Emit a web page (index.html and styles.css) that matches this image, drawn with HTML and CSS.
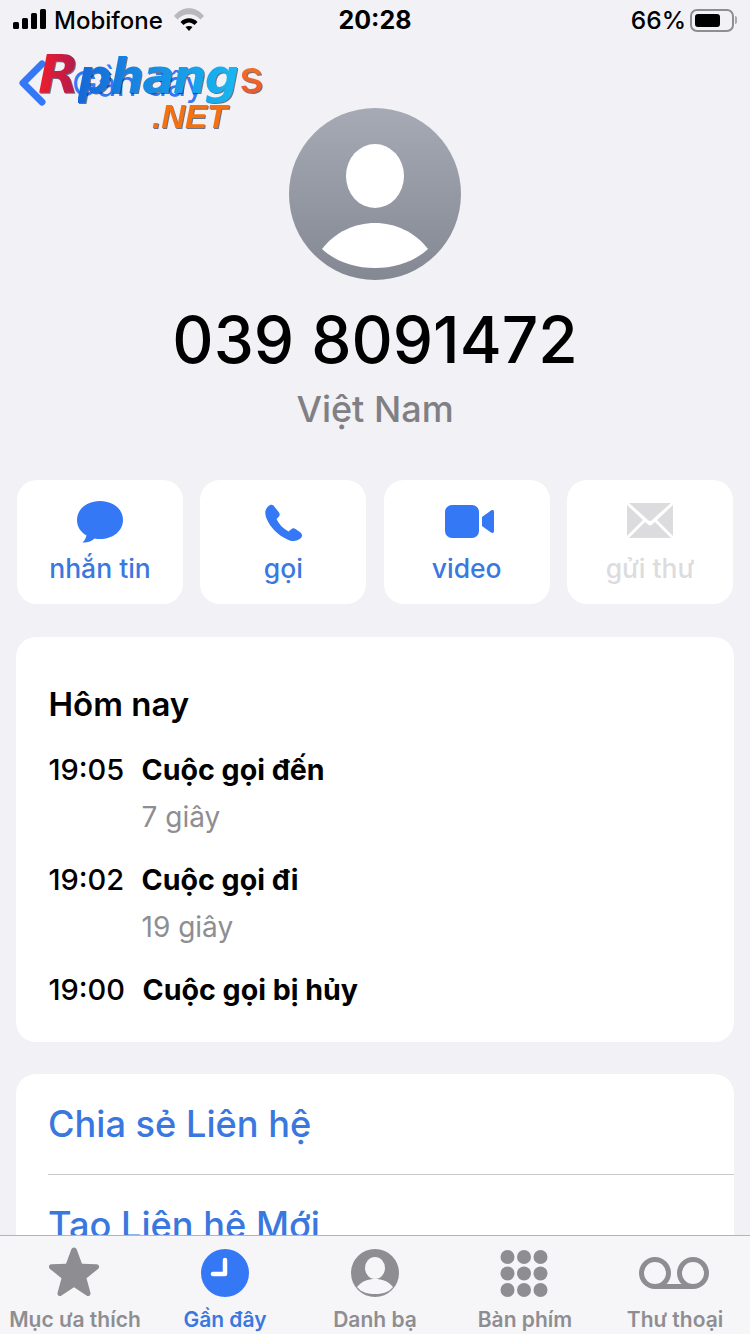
FILE: index.html
```html
<!DOCTYPE html>
<html lang="vi">
<head>
<meta charset="utf-8">
<title>Gần đây</title>
<link rel="stylesheet" href="styles.css">
</head>
<body>
<div class="phone">
  <div class="status">
    <div class="status-left">
      <svg class="signal" viewBox="0 0 34 20" width="34" height="20"><rect x="0" y="13" width="6" height="7" rx="1.5"/><rect x="9" y="9" width="6" height="11" rx="1.5"/><rect x="18" y="4" width="6" height="16" rx="1.5"/><rect x="27" y="0" width="6" height="20" rx="1.5"/></svg>
      <span class="carrier">Mobifone</span>
      <svg class="wifi" viewBox="0 0 30 23" width="30" height="23"><path d="M0 8C8 -2.500 22 -2.500 30 8L26.500 11.500C20 4.500 10 4.500 3.500 11.500Z" fill="#b9b9bb"/><path d="M6.500 14C11 9 19 9 23.500 14L20.500 17C17 13.500 13 13.500 9.500 17Z"/><path d="M11.500 19C13.500 17.500 16.500 17.500 18.500 19L15 23Z"/></svg>
    </div>
    <div class="clock">20:28</div>
    <div class="status-right">
      <span class="percent">66%</span>
      <span class="battery"><span class="battery-fill"></span></span>
      <span class="battery-tip"></span>
    </div>
  </div>

  <main class="content">
    <div class="nav">
      <svg class="chevron" viewBox="0 0 30 46" width="30" height="46"><path d="M25 4L6 23L25 42" fill="none" stroke="#3478f6" stroke-width="7" stroke-linecap="round" stroke-linejoin="round"/></svg>
      <span class="back-label">Gần đây</span>
    </div>

    <div class="profile">
      <svg class="avatar" viewBox="0 0 172 172" width="172" height="172">
        <defs><linearGradient id="ag" x1="0" y1="0" x2="0" y2="1"><stop offset="0" stop-color="#a6aab5"/><stop offset="1" stop-color="#848892"/></linearGradient></defs>
        <circle cx="86" cy="86" r="86" fill="url(#ag)"/>
        <ellipse cx="86" cy="68" rx="29" ry="32" fill="#fff"/>
        <path d="M33 141C46 124 66 115 86 115C106 115 126 124 139 141C125 154 106 160 86 160C66 160 47 154 33 141Z" fill="#fff"/>
      </svg>
      <div class="number">039 8091472</div>
      <div class="country">Việt Nam</div>
    </div>

    <div class="actions">
      <div class="action">
        <svg viewBox="0 0 48 44" width="48" height="44"><path d="M24 1C11 1 1 9 1 20C1 27 5 32.500 10.500 35.500C10 38 8.500 40.500 6.500 42.500C11 43 15.500 41.500 18.500 38.500C20.500 39 22 39 24 39C37 39 47 31 47 20C47 9 37 1 24 1Z" fill="#3478f6"/></svg>
        <span class="action-label">nhắn tin</span>
      </div>
      <div class="action">
        <svg viewBox="0 0 48 44" width="48" height="44"><path d="M9 6.500C11 4.500 13 4 14.500 5.500L20 12.500C21 14 21 15.500 19.500 17L17.500 19C20 24.500 24 28.500 29.500 31.500L32 29.500C33.500 28 35 28 36.500 29L41.500 32.500C43.500 34 43.500 36.500 42 38C38 41.500 33.500 42 28.500 39.500C18 34.500 11.500 27.500 7.500 18.500C5.500 13.500 6 9.500 9 6.500Z" fill="#3478f6"/></svg>
        <span class="action-label">gọi</span>
      </div>
      <div class="action">
        <svg viewBox="0 0 48 44" width="48" height="44"><rect x="2" y="5" width="34" height="33" rx="7" fill="#3478f6"/><path d="M39 17L48 10.500C49.500 9.500 51 10 51 12V31C51 33 49.500 33.500 48 32.500L39 26Z" fill="#3478f6"/></svg>
        <span class="action-label">video</span>
      </div>
      <div class="action action-off">
        <svg viewBox="0 0 48 44" width="48" height="44"><path d="M3 3H45L26 20C24.500 21.300 23.500 21.300 22 20Z" fill="#dcdcde"/><path d="M1 5V36L17 20Z" fill="#dcdcde"/><path d="M47 5V36L31 20Z" fill="#dcdcde"/><path d="M3 38L19 22L22 24.500C23.500 25.800 24.500 25.800 26 24.500L29 22L45 38Z" fill="#dcdcde"/></svg>
        <span class="action-label">gửi thư</span>
      </div>
    </div>

    <section class="card history">
      <h2 class="day">Hôm nay</h2>
      <div class="call">
        <span class="time">19:05</span>
        <div><div class="call-title">Cuộc gọi đến</div><div class="call-dur">7 giây</div></div>
      </div>
      <div class="call">
        <span class="time">19:02</span>
        <div><div class="call-title">Cuộc gọi đi</div><div class="call-dur">19 giây</div></div>
      </div>
      <div class="call">
        <span class="time">19:00</span>
        <div><div class="call-title call-title-last">Cuộc gọi bị hủy</div></div>
      </div>
    </section>

    <section class="card links">
      <div class="link">Chia sẻ Liên hệ</div>
      <div class="link link-next">Tạo Liên hệ Mới</div>
    </section>
  </main>

  <nav class="tabbar">
    <div class="tab">
      <svg class="star" viewBox="0 0 52 48" width="52" height="50" preserveAspectRatio="none"><path d="M26 1.500C27.500 1.500 28.500 2.500 29 4L34 17L48.500 17.500C51 17.500 52 20.500 50 22L38.500 31L42.500 45C43 47.500 40.500 49 38.500 47.500L26 39.500L13.500 47.500C11.500 49 9 47.500 9.500 45L13.500 31L2 22C0 20.500 1 17.500 3.500 17.500L18 17L23 4C23.500 2.500 24.500 1.500 26 1.500Z" fill="#8e8e92"/></svg>
      <span class="tab-label">Mục ưa thích</span>
    </div>
    <div class="tab tab-on">
      <svg viewBox="0 0 52 50" width="52" height="50"><circle cx="26" cy="27" r="24" fill="#3478f6"/><path d="M26 14V28H14" fill="none" stroke="#fff" stroke-width="4.500" stroke-linecap="round" stroke-linejoin="round"/></svg>
      <span class="tab-label">Gần đây</span>
    </div>
    <div class="tab">
      <svg viewBox="0 0 52 50" width="52" height="50"><circle cx="26" cy="27" r="24" fill="#8e8e92"/><ellipse cx="26" cy="22" rx="10" ry="11" fill="#f6f6f8"/><path d="M8 41C13 35 19 33 26 33C33 33 39 35 44 41C39 47 33 48 26 48C19 48 13 47 8 41Z" fill="#f6f6f8"/></svg>
      <span class="tab-label">Danh bạ</span>
    </div>
    <div class="tab">
      <svg viewBox="0 0 52 50" width="52" height="50" fill="#8e8e92"><circle cx="8.500" cy="11" r="7"/><circle cx="25" cy="11" r="7"/><circle cx="41.500" cy="11" r="7"/><circle cx="8.500" cy="27.500" r="7"/><circle cx="25" cy="27.500" r="7"/><circle cx="41.500" cy="27.500" r="7"/><circle cx="8.500" cy="44" r="7"/><circle cx="25" cy="44" r="7"/><circle cx="41.500" cy="44" r="7"/></svg>
      <span class="tab-label">Bàn phím</span>
    </div>
    <div class="tab">
      <svg viewBox="0 0 72 50" width="72" height="50"><circle cx="16" cy="27" r="13.500" fill="none" stroke="#8e8e92" stroke-width="5"/><circle cx="54" cy="27" r="13.500" fill="none" stroke="#8e8e92" stroke-width="5"/><rect x="16" y="38" width="38" height="5" fill="#8e8e92"/></svg>
      <span class="tab-label">Thư thoại</span>
    </div>
  </nav>

  <div class="logo">
    <div class="logo-main"><span class="logo-r">R</span><span class="logo-p">phang</span><span class="logo-s">s</span></div>
    <div class="logo-net">.NET</div>
  </div>
</div>
</body>
</html>
```

FILE: styles.css
```css
* { box-sizing: border-box; margin: 0; padding: 0; }
html, body { width: 750px; height: 1334px; overflow: hidden; }
body { font-family: Inter, "Noto Sans", "Liberation Sans", sans-serif; background: #f1f1f6; color: #000; }

.phone { position: relative; width: 750px; height: 1334px; display: flex; flex-direction: column; overflow: hidden; }

.status { height: 40px; flex: none; display: grid; grid-template-columns: 1fr auto 1fr; align-items: center; padding: 0 13px; }
.status-left { display: flex; align-items: center; gap: 7px; }
.signal { margin-top: -3px; }
.carrier { font-size: 24px; font-weight: 500; }
.wifi { margin: -1px 0 0 4px; }
.clock { font-size: 25px; font-weight: 700; }
.status-right { display: flex; align-items: center; justify-content: flex-end; }
.percent { font-size: 24.500px; font-weight: 500; margin-right: 4px; }
.battery { width: 44px; height: 23px; border: 2px solid #8e8e92; border-radius: 7px; padding: 3px; display: block; }
.battery-fill { display: block; width: 25px; height: 13px; background: #000; border-radius: 3px; }
.battery-tip { width: 2px; height: 8px; background: #a9a9ac; border-radius: 0 2px 2px 0; margin-left: 1px; }

.content { flex: 1; min-height: 0; overflow: hidden; }

.nav { height: 68px; display: flex; align-items: center; padding: 14px 0 0 17px; gap: 25px; margin-top: 2px; }
.back-label { font-size: 34px; color: #3478f6; }

.profile { display: flex; flex-direction: column; align-items: center; }
.avatar { margin-top: -2px; }
.number { font-size: 64px; font-weight: 500; line-height: 76px; margin-top: 22px; }
.country { font-size: 36px; font-weight: 500; color: #808084; line-height: 44px; margin-top: 9px; }

.actions { display: flex; gap: 17.33px; padding: 0 17px; margin-top: 49px; }
.action { width: 166px; height: 124px; background: #fff; border-radius: 20px; display: flex; flex-direction: column; align-items: center; padding-top: 20px; }
.action svg { overflow: visible; }
.action-label { font-size: 26.500px; font-weight: 500; color: #3a78e0; line-height: 32px; margin-top: 8px; }
.action-off .action-label { color: #dcdcde; }

.card { background: #fff; border-radius: 20px; margin: 0 16px; }
.history { margin-top: 33px; height: 405px; padding: 46px 33px 0 32.500px; }
.day { font-size: 33px; font-weight: 600; line-height: 42px; margin-bottom: 24px; }
.call { display: flex; gap: 17px; margin-bottom: 21px; }
.time { font-size: 29px; font-weight: 500; line-height: 42px; width: 76px; }
.call-title { font-size: 28.600px; font-weight: 700; line-height: 42px; }
.call-title-last { margin-left: 1px; }
.call-dur { font-size: 28px; color: #8e8e92; line-height: 42px; margin-top: 5px; }

.links { margin-top: 32px; padding-left: 32px; height: 240px; }
.link { font-size: 36.200px; font-weight: 500; color: #3a78e0; line-height: 100px; }
.link-next { border-top: 1px solid #c8c8ca; }

.tabbar { flex: none; height: 99px; border-top: 1px solid #b4b4b6; background: #f6f6f8; display: grid; grid-template-columns: repeat(5, 150px); }
.tab { display: flex; flex-direction: column; align-items: center; padding-top: 10px; }
.tab svg { overflow: visible; }
.star { margin-left: -2px; }
.tab-label { font-size: 21px; font-weight: 600; color: #8e8e92; line-height: 26px; margin-top: 11px; white-space: nowrap; }
.tab-on .tab-label { color: #3a78e0; }

.logo { position: absolute; left: 38px; top: 44px; width: 230px; font-family: "DejaVu Sans", sans-serif; filter: drop-shadow(1px 1px 0 rgba(20, 30, 60, .6)); }
.logo-main { font-size: 48px; font-weight: 700; font-style: italic; line-height: 62px; letter-spacing: -2px; white-space: nowrap; }
.logo-r { background: linear-gradient(90deg, #f01c2a, #b01c50); -webkit-background-clip: text; background-clip: text; color: transparent; font-size: 54px; }
.logo-p { background: linear-gradient(90deg, #1668d8, #18b8f0); -webkit-background-clip: text; background-clip: text; color: transparent; }
.logo-s { background: linear-gradient(180deg, #f58020, #e85030); -webkit-background-clip: text; background-clip: text; color: transparent; font-style: normal; font-weight: 500; font-family: Inter, sans-serif; font-size: 46px; letter-spacing: 0; margin-left: 2px; }
.logo-net { font-family: "Liberation Sans", sans-serif; font-size: 33px; font-weight: 700; font-style: italic; color: #f57110; line-height: 30px; margin: -5px 0 0 114px; }
```
